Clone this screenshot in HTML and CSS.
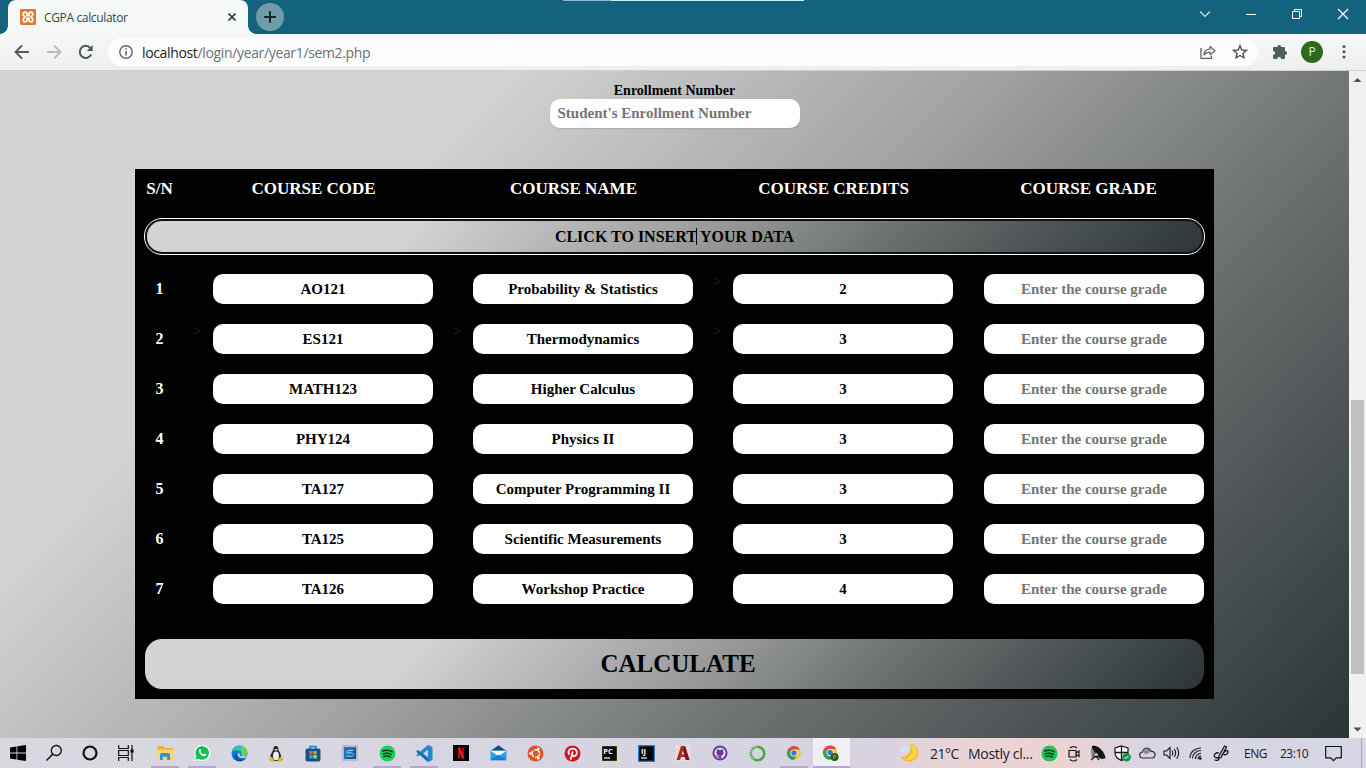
FILE: index.html
```html
<!DOCTYPE html>
<html lang="en">
<head>
<meta charset="utf-8">
<title>CGPA calculator</title>
<link rel="stylesheet" href="styles.css">
</head>
<body>
<div class="window">
  <header class="tabbar">
    <div class="tab">
      <svg class="favicon" width="16" height="16" viewBox="0 0 16 16"><rect width="16" height="16" rx="1.500" fill="#e0762e"/><path d="M5 3.200C2.600 3.200 2.600 6.800 4.600 7.400V8.600C2.600 9.200 2.600 12.800 5 12.800S7 11 7 9.300H9C9 11 8.600 12.800 11 12.800S13.400 9.200 11.400 8.600V7.400C13.400 6.800 13.400 3.200 11 3.200S9 5 9 6.700H7C7 5 7.400 3.200 5 3.200Z" fill="none" stroke="#fff" stroke-width="1.800"/></svg>
      <span class="tab-title">CGPA calculator</span>
      <svg class="tab-close" width="10" height="10" viewBox="0 0 10 10"><path d="M1.500 1.500l7 7M8.500 1.500l-7 7" stroke="#1d3a35" stroke-width="1.700"/></svg>
    </div>
    <div class="newtab"><svg width="14" height="14" viewBox="0 0 14 14"><path d="M7 1.200v11.600M1.200 7h11.600" stroke="#12252a" stroke-width="2"/></svg></div>
    <div class="loadline"></div>
    <div class="controls">
      <svg width="46" height="28" viewBox="0 0 46 28"><path d="M18 11.500l5 5 5-5" fill="none" stroke="#cfe8ee" stroke-width="1.100"/></svg>
      <svg width="46" height="28" viewBox="0 0 46 28"><path d="M18 14.500h10" stroke="#fff" stroke-width="1"/></svg>
      <svg width="46" height="28" viewBox="0 0 46 28"><path d="M18.500 11.500h7v7h-7zM20.500 11v-1.500h7v7H26" fill="none" stroke="#fff" stroke-width="1"/></svg>
      <svg width="46" height="28" viewBox="0 0 46 28"><path d="M18 9l10 10M28 9L18 19" stroke="#fff" stroke-width="1.200"/></svg>
    </div>
  </header>
  <div class="toolbar">
    <svg class="nav" width="16" height="16" viewBox="0 0 16 16"><path d="M15 8H2M8 1.500L1.500 8 8 14.500" fill="none" stroke="#55595b" stroke-width="1.900"/></svg>
    <svg class="nav" width="16" height="16" viewBox="0 0 16 16"><path d="M1 8h13M8 1.500L14.500 8 8 14.500" fill="none" stroke="#b9bbbd" stroke-width="1.900"/></svg>
    <svg class="nav" width="16" height="16" viewBox="0 0 16 16"><path d="M13.200 10.500A6 6 0 1 1 12.400 4" fill="none" stroke="#4a5a57" stroke-width="2"/><path d="M14.700 1v6H8.800z" fill="#4a5a57"/></svg>
    <div class="omnibox">
      <svg width="16" height="16" viewBox="0 0 16 16"><circle cx="8" cy="8" r="6.200" fill="none" stroke="#5f6368" stroke-width="1.400"/><path d="M8 7v4.500M8 4.200v1.600" stroke="#5f6368" stroke-width="1.600"/></svg>
      <span class="url"><b>localhost</b>/login/year/year1/sem2.php</span>
      <svg class="share" width="16" height="16" viewBox="0 0 16 16"><path d="M1 4v10.300h10.500v-2.800" fill="none" stroke="#5f6368" stroke-width="1.300"/><path d="M4 11c.3-4 2.500-5.800 6-5.800V2.500l5 4.200-5 4V8.200C7.500 8.200 5.500 9 4 11z" fill="none" stroke="#5f6368" stroke-width="1.200" stroke-linejoin="round"/></svg>
      <svg width="16" height="16" viewBox="0 0 16 16"><path d="M8 1.800l1.800 4.200 4.600.4-3.500 3 1.100 4.500-4-2.400-4 2.400 1.100-4.500-3.500-3 4.600-.4z" fill="none" stroke="#4f5355" stroke-width="1.400"/></svg>
    </div>
    <svg class="puzzle" width="16" height="16" viewBox="0 0 16 16"><path d="M5.200 3a2 2 0 0 1 4 0H12a1 1 0 0 1 1 1v3a2 2 0 0 1 0 4v3a1 1 0 0 1-1 1H9.200a2 2 0 0 0-4 0H2a1 1 0 0 1-1-1v-3a2 2 0 0 0 0-4V4a1 1 0 0 1 1-1z" fill="#4f605c"/></svg>
    <div class="avatar">P</div>
    <svg class="dots" width="4" height="16" viewBox="0 0 4 16"><g fill="#4f5355"><circle cx="2" cy="2.500" r="1.500"/><circle cx="2" cy="7.700" r="1.500"/><circle cx="2" cy="12.900" r="1.500"/></g></svg>
  </div>
  <div class="viewport">
    <main class="page">
      <div class="enroll">
        <label>Enrollment Number</label>
        <div class="enroll-field">Student's Enrollment Number</div>
      </div>
      <section class="courses">
        <div class="head"><span>S/N</span><span>COURSE CODE</span><span>COURSE NAME</span><span>COURSE CREDITS</span><span>COURSE GRADE</span></div>
        <div class="insert">CLICK TO INSERT YOUR DATA<i class="caret"></i></div>
        <div class="rows">
          <div class="row"><span class="sn">1</span><div class="cell"><i></i><div class="field">AO121</div></div><div class="cell"><i></i><div class="field">Probability &amp; Statistics</div></div><div class="cell"><i>&gt;</i><div class="field">2</div></div><div class="cell"><i></i><div class="field hint">Enter the course grade</div></div></div>
          <div class="row"><span class="sn">2</span><div class="cell"><i>&gt;</i><div class="field">ES121</div></div><div class="cell"><i>&gt;</i><div class="field">Thermodynamics</div></div><div class="cell"><i>&gt;</i><div class="field">3</div></div><div class="cell"><i></i><div class="field hint">Enter the course grade</div></div></div>
          <div class="row"><span class="sn">3</span><div class="cell"><i></i><div class="field">MATH123</div></div><div class="cell"><i></i><div class="field">Higher Calculus</div></div><div class="cell"><i></i><div class="field">3</div></div><div class="cell"><i></i><div class="field hint">Enter the course grade</div></div></div>
          <div class="row"><span class="sn">4</span><div class="cell"><i></i><div class="field">PHY124</div></div><div class="cell"><i></i><div class="field">Physics II</div></div><div class="cell"><i></i><div class="field">3</div></div><div class="cell"><i></i><div class="field hint">Enter the course grade</div></div></div>
          <div class="row"><span class="sn">5</span><div class="cell"><i></i><div class="field">TA127</div></div><div class="cell"><i></i><div class="field">Computer Programming II</div></div><div class="cell"><i></i><div class="field">3</div></div><div class="cell"><i></i><div class="field hint">Enter the course grade</div></div></div>
          <div class="row"><span class="sn">6</span><div class="cell"><i></i><div class="field">TA125</div></div><div class="cell"><i></i><div class="field">Scientific Measurements</div></div><div class="cell"><i></i><div class="field">3</div></div><div class="cell"><i></i><div class="field hint">Enter the course grade</div></div></div>
          <div class="row"><span class="sn">7</span><div class="cell"><i></i><div class="field">TA126</div></div><div class="cell"><i></i><div class="field">Workshop Practice</div></div><div class="cell"><i></i><div class="field">4</div></div><div class="cell"><i></i><div class="field hint">Enter the course grade</div></div></div>
        </div>
        <div class="calculate">CALCULATE</div>
      </section>
    </main>
    <div class="scrollbar">
      <svg width="17" height="17" viewBox="0 0 17 17"><path d="M4.500 11L8.500 7l4 4z" fill="#505050"/></svg>
      <div class="thumb"></div>
      <svg class="down" width="17" height="17" viewBox="0 0 17 17"><path d="M4.500 6.500l4 4 4-4z" fill="#505050"/></svg>
    </div>
  </div>
  <footer class="taskbar">
    <div class="sys">
      <span><svg width="16" height="16" viewBox="0 0 16 16"><path d="M0 2.400l6.500-1v6.100H0zM7.300 1.300L16 0v7.500H7.300zM0 8.400h6.500v6.100L0 13.600zM7.300 8.400H16V16l-8.700-1.300z"/></svg></span>
      <span><svg width="18" height="18" viewBox="0 0 18 18"><circle cx="11.300" cy="6.500" r="5" fill="none" stroke="#111" stroke-width="1.300"/><path d="M7.700 10.200L1.500 16.500" stroke="#111" stroke-width="1.500"/></svg></span>
      <span><svg width="16" height="16" viewBox="0 0 16 16"><circle cx="8" cy="8" r="6.500" fill="none" stroke="#111" stroke-width="2.200"/></svg></span>
      <span><svg width="16" height="16" viewBox="0 0 16 16"><path d="M.7 0v3.500h9.600V0M.7 16v-3.500h9.600V16M.7 5.500h9.600v5H.7zM14 0v16" fill="none" stroke="#111" stroke-width="1.200"/><path d="M12.500 4.500h3v3h-3z"/></svg></span>
    </div>
    <div class="apps">
      <span class="run"><svg width="18" height="16" viewBox="0 0 18 16"><path d="M1 1h6l2 2h8v12H1z" fill="#e9b03b"/><path d="M1 4.500h16V15H1z" fill="#fbd46b"/><path d="M4 15V9.500A1.500 1.500 0 0 1 5.500 8h7A1.500 1.500 0 0 1 14 9.500V15h-2.800v-3.300H6.800V15z" fill="#3a8fd0"/></svg></span>
      <span class="run"><svg width="18" height="18" viewBox="0 0 18 18"><path d="M1 17l1.300-4.200A8 8 0 1 1 5.500 16z" fill="#fff"/><path d="M2.300 15.700l1-3.400a6.800 6.800 0 1 1 2.500 2.500z" fill="#16c051"/><path d="M6.300 5.200c.8-.6 1.300-.2 1.700 1.100.3.800-.6 1.200-.4 1.600.7 1.200 1.500 1.900 2.600 2.400.5.200.8-1 1.300-.8 1.600.6 2 .9 1.500 1.900-1.600 2.600-8.500-1.800-6.700-6.200z" fill="#fff"/></svg></span>
      <span><svg width="17" height="17" viewBox="0 0 17 17"><circle cx="8.500" cy="8.500" r="8" fill="#1578c8"/><path d="M.7 7C2 1 8-.5 12 1.300c5 2.300 5.700 8.400 2.500 9.700-2 .8-5-.2-4-2 1.500-3-5.500-5-9.800-2z" fill="#35bfb0"/><path d="M10 1c6 1 7.500 7 5.500 9-2 1.800-6 .5-5-1z" fill="#63d45a"/><path d="M6 8c-1.500 4 2 7.500 7.500 6-3 4-9.500 2.500-10-2C3.300 10 4 8.500 6 8z" fill="#12509f"/><path d="M7.800 8.200c-.9 3 1.800 5.300 7.700 3.400" stroke="#dce4f0" stroke-width="1.400" fill="none"/></svg></span>
      <span><svg width="14" height="17" viewBox="0 0 14 17"><path d="M4.500 3C4.500.5 9 .3 9.200 3c0 3 3.300 6 3 9.500L10 16H4l-2.500-4C1 9 4.500 6 4.500 3z" fill="#252525"/><ellipse cx="7" cy="10.800" rx="3" ry="4.400" fill="#eee"/><path d="M5 4h4L7 6.300z" fill="#edb83a"/><path d="M0 13l2.700-1.200L5.500 15 4.300 17 .3 15.800zM14 13l-2.700-1.200L8.500 15l1.200 2 4-1.200z" fill="#e2b02e"/></svg></span>
      <span><svg width="16" height="17" viewBox="0 0 16 17"><path d="M5 4V1.600h6V4" fill="none" stroke="#1c82c7" stroke-width="1.500"/><rect x=".5" y="3.500" width="15" height="13" rx="2" fill="#17518b"/><path d="M4.300 6h3.300v3.300H4.300z" fill="#f15b2e"/><path d="M8.400 6h3.300v3.300H8.400z" fill="#83c340"/><path d="M4.300 10.100h3.300v3.300H4.300z" fill="#29a8e8"/><path d="M8.400 10.100h3.300v3.300H8.400z" fill="#fcc32d"/></svg></span>
      <span><svg width="16" height="16" viewBox="0 0 16 16"><rect width="16" height="16" fill="#b8b5df"/><rect x="2" y="2" width="12" height="12" fill="#0f5794"/><path d="M2 2h12L4 14H2z" fill="#1878b5"/><path d="M11.500 5.500H6L4.500 7 6 8h4.500L12 9.500l-1.500 1.700h-6" fill="none" stroke="#a7d4ed"/></svg></span>
      <span class="run"><svg width="17" height="17" viewBox="0 0 17 17"><circle cx="8.500" cy="8.500" r="8" fill="#20cf5d"/><path d="M3.800 6c3-1.100 6.800-.8 9.500.8M4.300 8.900c2.700-.9 5.700-.6 8 .8M4.800 11.500c2.200-.7 4.700-.4 6.600.7" fill="none" stroke="#113a20" stroke-width="1.500" stroke-linecap="round"/></svg></span>
      <span class="run"><svg width="17" height="17" viewBox="0 0 17 17"><path d="M12 0l4.500 2v13L12 17 4 9.700 1.800 11.500.5 10.800v-1L6.500 4.500z" fill="#2489ca"/><path d="M12 17L.5 6.900v-1l1.300-.8L12 12.700z" fill="#1070b3"/><path d="M12 4.700V12.300L7.200 8.500z" fill="#d8d5e3"/></svg></span>
      <span><svg width="16" height="16" viewBox="0 0 16 16"><rect width="16" height="16" fill="#050505"/><path d="M5 2.500h2.200v11H5zM9 2.500h2.200v11H9z" fill="#b20710"/><path d="M5 2.500h2.200l4 11H9z" fill="#e92029"/></svg></span>
      <span><svg width="17" height="16" viewBox="0 0 17 16"><path d="M.5 6L8.500.3l8 5.700H.5z" fill="#124b86"/><path d="M.5 5.700h16v9.500H.5z" fill="#28a2e5"/><path d="M.5 5.700h16l-8 5.500z" fill="#fff"/><path d="M.5 15.200l8-5.500 8 5.500z" fill="#1480ce"/></svg></span>
      <span><svg width="17" height="17" viewBox="0 0 17 17"><circle cx="8.500" cy="8.500" r="8" fill="#dd5428"/><circle cx="8.800" cy="8.500" r="3.800" fill="none" stroke="#fff" stroke-width="1.400" stroke-dasharray="6.600 1.360"/><g fill="#fff"><circle cx="3.400" cy="8.500" r="1.300"/><circle cx="11.300" cy="3.800" r="1.300"/><circle cx="11.300" cy="13.200" r="1.300"/></g></svg></span>
      <span><svg width="17" height="17" viewBox="0 0 17 17"><circle cx="8.500" cy="8.500" r="8" fill="#d5112b"/><path d="M5.500 9.600C3 6.800 5.300 3.700 8.700 3.700s5 2.800 3.900 5.400c-1 2.500-3.700 2.700-4.300 1M8.700 6.500L6.700 14.500" fill="none" stroke="#fff" stroke-width="1.700"/></svg></span>
      <span><svg width="17" height="17" viewBox="0 0 17 17"><rect width="17" height="17" fill="#dce97c"/><rect x="1.200" y="1.200" width="14.600" height="14.600" fill="#060606"/><text x="2.200" y="8.900" class="ide">PC</text><path d="M3 13h6" stroke="#fff" stroke-width="1.200"/></svg></span>
      <span><svg width="17" height="17" viewBox="0 0 17 17"><rect width="17" height="17" fill="#2a78c8"/><rect x="1.300" y="1.300" width="14.400" height="14.400" fill="#060606"/><text x="3" y="8.900" class="ide">IJ</text><path d="M3 13h6" stroke="#fff" stroke-width="1.200"/></svg></span>
      <span><svg width="16" height="16" viewBox="0 0 16 16"><rect width="16" height="16" fill="#eed9d5"/><path d="M6 1h4l4.500 14h-3.700L10 12H6l-1 3H1.500z" fill="#a62b2b"/><path d="M8 5l1.300 4.500H6.600z" fill="#eed9d5"/><path d="M10 1l4.500 14h-3.700L8 5z" fill="#741a20"/></svg></span>
      <span><svg width="16" height="16" viewBox="0 0 16 16"><circle cx="8" cy="8" r="7.500" fill="#633b93"/><circle cx="8" cy="8" r="5.600" fill="#e7e0ef"/><path d="M4.800 4l1.700.9c1-.3 2-.3 3 0l1.700-.9v2c1 2.800-.2 4.200-2 4.500v3H6.800v-3C4.500 10.200 4 8 4.800 6z" fill="#633b93"/><path d="M3.500 10.500c1.500 0 1.500 1.500 3.300 1.200" stroke="#633b93" fill="none"/></svg></span>
      <span><svg width="17" height="17" viewBox="0 0 17 17"><circle cx="8.500" cy="8.500" r="6.700" fill="none" stroke="#43aa36" stroke-width="2.600" stroke-dasharray="1.500 .8"/><path d="M8.500 1.800a6.700 6.700 0 1 1-3 12.700" fill="none" stroke="#43aa36" stroke-width="2.200"/></svg></span>
      <span class="run"><svg width="14" height="14" viewBox="0 0 16 16"><circle cx="8" cy="8" r="8" fill="#fbc72d"/><path d="M1.070 4A8 8 0 0 1 14.930 4H8L4.500 10z" fill="#dd4a36"/><path d="M1.070 4A8 8 0 0 0 8 16l3.500-6H4.500z" fill="#2fa152"/><circle cx="8" cy="8" r="4" fill="#fff"/><circle cx="8" cy="8" r="3.100" fill="#3678d6"/></svg></span>
      <span class="active"><svg width="16" height="17" viewBox="0 0 18 18"><circle cx="8" cy="8" r="8" fill="#fbc72d"/><path d="M1.070 4A8 8 0 0 1 14.930 4H8L4.500 10z" fill="#dd4a36"/><path d="M1.070 4A8 8 0 0 0 8 16l3.500-6H4.500z" fill="#2fa152"/><circle cx="8" cy="8" r="4" fill="#fff"/><circle cx="8" cy="8" r="3.100" fill="#3678d6"/><circle cx="13" cy="13" r="4.500" fill="#2a591f"/><path d="M12 15v-4h1.500a1 1 0 0 1 0 2H12" fill="none" stroke="#8ab07c"/></svg></span>
    </div>
    <div class="weather">
      <svg width="20" height="18" viewBox="0 0 20 18"><path d="M11 0C19 .5 21.500 9 17.500 14 13.500 19 4.500 18.500 2 12.500 8 14 13.500 8 11 0z" fill="#f8b524"/><path d="M11.500.5c7 1 8.500 8 5 12.500-3 3.500-8.500 4.200-12 1.500C12 14.500 15 7 11.500.5z" fill="#fbd640"/><path d="M2.500 8a2.200 2.200 0 0 1 0-4.400C3.500.5 8 .8 8.500 3.500a2.300 2.300 0 0 1 0 4.500z" fill="#cfe2f5"/></svg>
      <span class="temp">21°C</span><span class="sky">Mostly cl...</span>
    </div>
    <div class="tray">
      <span><svg width="17" height="17" viewBox="0 0 17 17"><circle cx="8.500" cy="8.500" r="8" fill="#20c45b"/><path d="M3.800 6c3-1.100 6.800-.8 9.500.8M4.300 8.900c2.700-.9 5.700-.6 8 .8M4.800 11.500c2.200-.7 4.700-.4 6.600.7" fill="none" stroke="#113a20" stroke-width="1.500" stroke-linecap="round"/></svg></span>
      <span><svg width="14" height="17" viewBox="0 0 14 17"><path d="M2 5.500h7v6.500H2zM9 8l3-2v5.500L9 9.500M3 3c2-2 5-2 7 0M3 14.500c2 2 5 2 7 0" fill="none" stroke="#151515" stroke-width="1.200"/></svg></span>
      <span><svg width="16" height="16" viewBox="0 0 16 16"><path d="M2 1c6-2 13 6 13.500 12-3 2-6 .5-8-1.500C4.500 9 1.500 5 2 1z" fill="#141414"/><path d="M1.500 2L7 11l-5 2.500C.8 10 .7 6 1.500 2z" fill="#8a8a8a"/><circle cx="6" cy="10" r="2.300" fill="#ddd" stroke="#222"/><path d="M1 15l5-4 3 4" fill="none" stroke="#222" stroke-width="1.300"/></svg></span>
      <span><svg width="17" height="17" viewBox="0 0 17 17"><path d="M7.500 1L14 3v5c0 4-3 6-6.500 7.500C4 14 1 12 1 8V3z" fill="#fff" stroke="#111" stroke-width="1.200"/><path d="M7.500 1v14.500M1 7.500h13" stroke="#111" stroke-width="1.300"/><circle cx="12.500" cy="12.200" r="4.300" fill="#159455"/><path d="M10.500 12l1.500 1.500 2.500-2.700" fill="none" stroke="#fff"/></svg></span>
      <span><svg width="17" height="12" viewBox="0 0 17 12"><path d="M4 11a3 3 0 0 1-.5-6C4 1.500 7.500.2 10 1.800c1.200.7 1.800 1.500 2 2.700 2.700-.3 4.500 1.500 4 3.500-.3 2-1.300 3-3 3z" fill="#d4d4d8" stroke="#2c2c30" stroke-width="1.200"/><path d="M3.800 5C4.500 1.800 7.500.8 10 2.200c1 .7 1.500 1.500 1.700 2.500L7 7.500z" fill="#8b8c91"/></svg></span>
      <span><svg width="17" height="14" viewBox="0 0 17 14"><path d="M1 5h2.500L7 1.500v11L3.500 9H1zM9 4.500c1 1.500 1 3.500 0 5M11.300 3c1.700 2.500 1.700 5.500 0 8M13.700 1.200c2.500 3.700 2.500 7.900 0 11.600" fill="none" stroke="#151515" stroke-width="1.100"/></svg></span>
      <span><svg width="16" height="16" viewBox="0 0 16 16"><path d="M2 13C2 7 7 3 13 3M4.500 13.500c0-4.500 4-8 8.500-8M7.500 14C7.500 10.800 10 8.300 13 8.300M10 14.300c0-2 1.300-3.200 3-3.200" fill="none" stroke="#262626" stroke-width="1.200"/><circle cx="12.300" cy="13.500" r="1.300"/></svg></span>
      <span><svg width="18" height="18" viewBox="0 0 18 18"><path d="M7 12l5.500-10 2 1L9 13.500l-2.500 1zM7 9c-3-1-5.500 1.500-4.500 3.700 1 2 4.500 0 4.500 2.300 0 1.500-3 1.700-4.500.7M10 11c2-4 6-6 6-3 0 2-3.500 4-4 2" fill="none" stroke="#151515" stroke-width="1.300"/></svg></span>
    </div>
    <span class="lang">ENG</span><span class="clock">23:10</span>
    <svg class="note" width="17" height="17" viewBox="0 0 17 17"><path d="M.7 1.500h15.600v11.300h-5L8.500 15.600l-2.800-2.800h-5z" fill="none" stroke="#111" stroke-width="1.200"/></svg>
    <div class="desk"></div>
  </footer>
</div>
</body>
</html>
```
FILE: styles.css
```css
* { box-sizing: border-box; }
body { margin: 0; overflow: hidden; background: #fff; }
svg { display: block; flex: none; }
.window { width: 1366px; height: 768px; display: flex; flex-direction: column; }

.tabbar { height: 34px; background: #13637e; display: flex; position: relative; font-family: "Open Sans", sans-serif; }
.tab { width: 240px; height: 34px; margin-left: 8px; background: #f6f7f7; border-radius: 8px 8px 0 0; display: flex; align-items: center; padding: 0 11px 0 12px; position: relative; }
.tab::before, .tab::after { content: ""; position: absolute; bottom: 0; width: 8px; height: 8px; }
.tab::before { left: -8px; background: radial-gradient(circle at 0 0, #13637e 7.5px, #f6f7f7 8px); }
.tab::after { right: -8px; background: radial-gradient(circle at 100% 0, #13637e 7.5px, #f6f7f7 8px); }
.tab-title { margin-left: 8px; font-size: 12px; letter-spacing: -0.35px; color: #2c4a47; flex: 1; white-space: nowrap; }
.newtab { width: 28px; height: 28px; margin: 3px 0 0 8px; border-radius: 50%; background: #6f9bab; display: flex; align-items: center; justify-content: center; }
.loadline { position: absolute; left: 563px; top: 0; width: 241px; height: 1px; background: linear-gradient(90deg, #8fb1da 48px, #c5f0f4 48px); }
.controls { display: flex; margin-left: auto; }

.toolbar { height: 37px; background: linear-gradient(#f6f7f7, #efefef); border-bottom: 1px solid #d0d1d1; display: flex; align-items: center; padding-left: 14px; font-family: "Open Sans", sans-serif; }
.nav { margin-right: 16px; }
.omnibox { width: 1150px; height: 28px; margin-left: -2px; border-radius: 14px; background: #fdfdfd; display: flex; align-items: center; padding: 0 10px; }
.url { flex: 1; margin-left: 8px; font-size: 14px; letter-spacing: -0.35px; color: #6c7073; white-space: nowrap; }
.url b { font-weight: 400; color: #202427; }
.share { margin-right: 16px; }
.puzzle { margin-left: 14px; }
.avatar { width: 22px; height: 22px; margin-left: 13px; border-radius: 50%; background: #2d6a1c; color: #e4efe0; font-size: 12px; line-height: 22px; text-align: center; }
.dots { margin-left: 19px; }

.viewport { height: 667px; display: flex; }
.page { width: 1349px; height: 667px; padding-top: 12px; background: linear-gradient(135deg, #d3d3d3 25%, #9fa0a2 50%, #686d6d 71%, #2c3437 100%); font-family: "Liberation Serif", serif; font-weight: bold; color: #000; }
.enroll { width: 250px; margin: 0 auto; }
.enroll label { display: block; font-size: 14px; line-height: 16px; text-align: center; }
.enroll-field { height: 29px; border-radius: 10px; background: #fff; color: #757575; font-size: 15px; line-height: 29px; padding-left: 8px; box-shadow: 0 1px 1px #99999980; }

.courses { width: 1079px; height: 530px; margin: 41px auto 0; padding: 0 10px; background: #000; }
.head { height: 50px; display: grid; grid-template-columns: 58px 260px 260px 255px 220px; color: #fff; font-size: 17px; line-height: 39px; }
.head span { width: 221px; text-align: center; }
.head span:first-child { width: 29px; }
.insert { height: 35px; border: 2px solid #101010; border-radius: 17px; outline: 1px solid #fff; background: linear-gradient(135deg, #d3d3d3 25%, #9fa0a2 50%, #686d6d 71%, #2c3437 100%) border-box; font-size: 16px; line-height: 32px; text-align: center; position: relative; }
.caret { position: absolute; left: 549px; top: 7px; width: 1px; height: 17px; background: #000; }
.rows { padding-top: 20px; display: flex; flex-direction: column; gap: 20px; }
.row { height: 30px; display: grid; grid-template-columns: 48px 260px 260px 251px 240px; }
.sn { width: 29px; color: #fff; font-size: 16px; line-height: 30px; text-align: center; }
.cell { display: flex; }
.cell i { width: 20px; flex: none; font-size: 15px; line-height: 15px; font-style: normal; font-weight: normal; color: #2b2b2b; }
.field { width: 220px; height: 30px; border-radius: 10px; background: #fff; font-size: 15px; line-height: 30px; text-align: center; }
.hint { color: #757575; }
.calculate { height: 50px; margin-top: 35px; border-radius: 17px; background: linear-gradient(135deg, #d3d3d3 25%, #9fa0a2 50%, #686d6d 71%, #2c3437 100%); font-size: 25px; line-height: 50px; text-align: center; padding-left: 7px; }

.scrollbar { width: 17px; background: #f1f1f1; display: flex; flex-direction: column; align-items: center; }
.thumb { width: 13px; height: 274px; margin-top: 312px; background: #c1c1c1; }
.down { margin-top: auto; }

.taskbar { height: 30px; display: flex; align-items: center; background: linear-gradient(90deg, #d9d8e0 0, #d6d3e2 800px, #d8d1e0 880px, #ead4d6 960px, #ecd3d3 1060px, #d9d4e2 1150px, #d6d6e4 1366px); font-family: "Open Sans", sans-serif; color: #1b1b1f; }
.sys, .apps, .tray { display: flex; height: 30px; }
.sys span { width: 36px; display: flex; align-items: center; justify-content: center; }
.apps { margin-left: 2.5px; }
.apps span { width: 37px; display: flex; align-items: center; justify-content: center; background-repeat: no-repeat; background-position: center bottom; }
.apps .run { background-image: linear-gradient(#b4a7d3, #b4a7d3); background-size: 28px 2px; }
.apps .active { background-color: #f0eff5; background-image: linear-gradient(#b4a7d3, #b4a7d3); background-size: 100% 2px; }
.ide { font: bold 7.500px "Open Sans", sans-serif; fill: #fff; }
.weather { display: flex; align-items: center; margin-left: 49.5px; width: 138px; font-size: 14px; white-space: nowrap; }
.temp { width: 38px; margin-left: 11px; letter-spacing: -0.5px; }
.sky { letter-spacing: -0.3px; }
.tray { margin-left: 0; }
.tray span { width: 24.500px; display: flex; align-items: center; justify-content: center; }
.lang { margin-left: 11px; width: 36px; font-size: 12px; letter-spacing: -0.5px; }
.clock { width: 45px; font-size: 12px; letter-spacing: -0.5px; }
.desk { margin-left: auto; width: 5px; height: 30px; border-left: 1px solid #a9a9b5; }
```
